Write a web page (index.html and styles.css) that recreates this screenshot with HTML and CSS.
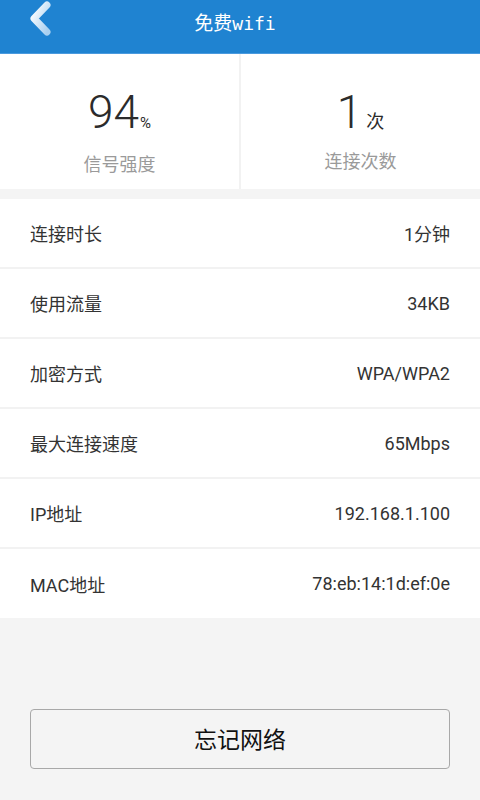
FILE: index.html
```html
<!DOCTYPE html>
<html lang="zh-CN">
<head>
  <meta charset="UTF-8" />
  <meta name="viewport" content="width=device-width, initial-scale=1.0"/>
  <title>免费wifi</title>
  <link rel="stylesheet" href="styles.css">
</head>
<body>

  <header class="topbar">
    <a class="back" href="#">
      <svg width="30" height="40" viewBox="0 0 30 40">
        <defs>
          <linearGradient id="backGrad" x1="0" y1="0" x2="1" y2="1">
            <stop offset="0" stop-color="#ffffff"/>
            <stop offset="1" stop-color="#a9d0f0"/>
          </linearGradient>
        </defs>
        <path d="M21 5 L8 18.5 L21 32" fill="none" stroke="url(#backGrad)" stroke-width="7" stroke-linecap="round" stroke-linejoin="round"/>
      </svg>
    </a>
    <h1 class="title">免费<span class="mono">wifi</span></h1>
  </header>

  <section class="stats">
    <div class="stat">
      <div class="stat-num">94<small>%</small></div>
      <div class="stat-label">信号强度</div>
    </div>
    <div class="stat">
      <div class="stat-num">1<small class="cn">次</small></div>
      <div class="stat-label">连接次数</div>
    </div>
  </section>

  <ul class="info">
    <li><span>连接时长</span><span class="val">1分钟</span></li>
    <li><span>使用流量</span><span class="val">34KB</span></li>
    <li><span>加密方式</span><span class="val">WPA/WPA2</span></li>
    <li><span>最大连接速度</span><span class="val">65Mbps</span></li>
    <li><span>IP地址</span><span class="val">192.168.1.100</span></li>
    <li><span>MAC地址</span><span class="val">78:eb:14:1d:ef:0e</span></li>
  </ul>

  <div class="actions">
    <button class="forget">忘记网络</button>
  </div>

</body>
</html>
```

FILE: styles.css
```css
body {
  font-family: Roboto, "Noto Sans CJK SC", sans-serif;
  margin: 0;
  padding: 0;
  background: #f4f4f4;
  color: #333;
}

.topbar {
  position: relative;
  height: 53px;
  background: #1f83d1;
  border-bottom: 1px solid #4a9ade;
  display: flex;
  align-items: center;
  justify-content: center;
}

.back {
  position: absolute;
  left: 26px;
  top: 0;
  display: block;
  height: 40px;
}

.title {
  margin: 0 10px 10px 0;
  font-size: 19px;
  font-weight: normal;
  color: #fff;
  font-family: "Noto Sans CJK SC", sans-serif;
}

.title .mono {
  font-family: "DejaVu Sans Mono", monospace;
  font-size: 18px;
}

.stats {
  display: flex;
  background: #fff;
  height: 135px;
  border-bottom: 10px solid #f4f4f4;
}

.stat {
  flex: 1;
  text-align: center;
  padding-top: 26px;
}

.stat + .stat {
  border-left: 2px solid #f2f2f2;
}

.stat-num {
  font-size: 46px;
  font-weight: 300;
  line-height: 64px;
  color: #2b2b2b;
}

.stat-num small {
  font-size: 15px;
  font-weight: normal;
  margin-left: 1px;
}

.stat-num small.cn {
  font-size: 18px;
  margin-left: 4px;
  font-family: "Noto Sans CJK SC", sans-serif;
}

.stat-label {
  margin-top: -5px;
  font-size: 18px;
  color: #9a9a9a;
  font-family: "Noto Sans CJK SC", sans-serif;
}

.info {
  list-style: none;
  margin: 0;
  padding: 0;
  background: #fff;
}

.info li {
  display: flex;
  justify-content: space-between;
  align-items: center;
  height: 68px;
  padding: 0 30px;
  font-size: 18px;
  border-bottom: 2px solid #f2f2f2;
}

.info li:last-child {
  border-bottom: none;
  height: 69px;
}

.info li .val {
  color: #333;
}

.actions {
  padding: 91px 30px 0;
}

.forget {
  width: 100%;
  height: 60px;
  padding: 0 0 3px;
  background: #f4f4f4;
  border: 1px solid #a8a8a8;
  border-radius: 4px;
  font-size: 23px;
  color: #111;
  font-family: "Noto Sans CJK SC", sans-serif;
  cursor: pointer;
}
```
